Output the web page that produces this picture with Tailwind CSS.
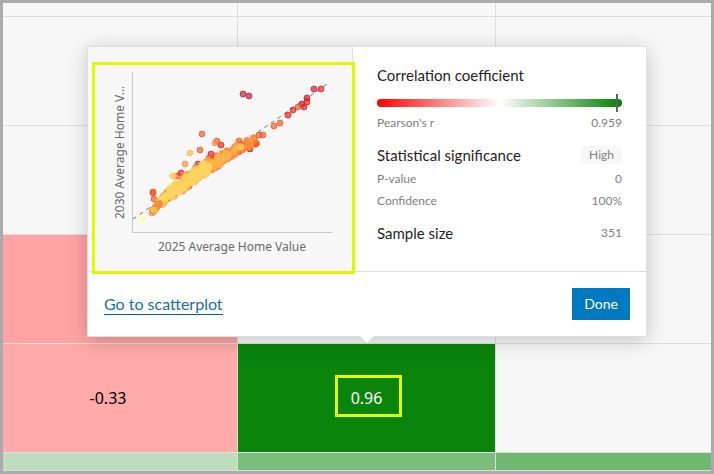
<!DOCTYPE html>
<html lang="en">

<head>
  <title>Correlation matrix</title>
  <meta charset="UTF-8">
  <meta name="viewport" content="width=device-width, initial-scale=1">
  <script src="https://cdn.jsdelivr.net/npm/@tailwindcss/browser@4"></script>
</head>

<body class="bg-[#f7f7f7] font-['Lato',sans-serif]">
  <main class="relative min-h-screen overflow-hidden border-3 border-[#ababab]">

    <!-- Matrix -->
    <table class="w-full table-fixed border-separate border-spacing-0 text-center font-['Noto_Sans',sans-serif] text-base text-black [&_td]:border-b [&_td]:border-[#dedede] [&_td]:p-0 [&_td:not(:last-child)]:border-r">
      <colgroup>
        <col class="w-[235px]">
        <col class="w-[258px]">
        <col>
      </colgroup>
      <tbody>
        <tr class="h-[14px]"><td></td><td></td><td></td></tr>
        <tr class="h-[109px]"><td></td><td></td><td></td></tr>
        <tr class="h-[109px]"><td></td><td></td><td></td></tr>
        <tr class="h-[109px]"><td class="bg-[#ffa4a4]"></td><td></td><td></td></tr>
        <tr class="h-[109px]">
          <td class="bg-[#ffaaaa]"><span class="pr-6">-0.33</span></td>
          <td class="bg-[#0b840b] text-white">
            <span class="relative">0.96
              <span class="absolute -top-3 -right-5 -bottom-2 -left-4 border-3 border-[#e5f900]"></span>
            </span>
          </td>
          <td></td>
        </tr>
        <tr class="h-[18px]">
          <td class="bg-[#bdddbd]"></td>
          <td class="bg-[#7bbd7b]"></td>
          <td class="bg-[#70b870]"></td>
        </tr>
      </tbody>
    </table>

    <!-- Popover -->
    <section class="absolute top-[43px] left-[84px] w-[560px] border border-[#dfdfdf] bg-white shadow-[0_4px_20px_rgba(0,0,0,0.2)]">
      <div class="flex border-b border-[#dfdfdf]">
        <div class="relative w-[265px] border-r border-[#dfdfdf] bg-[#f7f7f7] font-['Noto_Sans',sans-serif]">
          <div class="flex pt-[25px] pl-5">
            <div class="flex h-[160px] w-6 rotate-180 items-center justify-center text-xs leading-6 whitespace-nowrap text-[#6a6a6a] [writing-mode:vertical-rl]">2030 Average Home V...</div>
            <svg id="plot" class="h-[161px] w-[201px] overflow-visible" viewBox="0 0 201 161" role="img" aria-label="Scatterplot">
              <path d="M0.5 0V160.5H200" fill="none" stroke="#c8c8c8" />
              <path d="M1 147L198 10" fill="none" stroke="#707070" stroke-dasharray="4 4" />
            </svg>
          </div>
          <div class="mt-1 pl-6 text-center text-xs leading-5 text-[#6a6a6a]">2025 Average Home Value</div>
          <div class="absolute top-[15px] -right-[3px] -bottom-[3px] left-1 border-3 border-[#e1f900]"></div>
        </div>

        <div class="flex-1 px-6 pt-[18px] pb-7 text-xs leading-5 text-[#808080]">
          <h2 class="text-[15px] leading-5 text-[#1f1f1f]">Correlation coefficient</h2>
          <div class="relative mt-3.5 h-2 rounded-full bg-linear-to-r/srgb from-[#ff0000] via-white to-[#008000]">
            <div class="absolute -inset-y-[5px] right-1 w-0.5 bg-[#606060]"></div>
          </div>
          <div class="mt-1.5 flex justify-between"><span>Pearson's r</span><span>0.959</span></div>
          <div class="mt-3 flex items-center justify-between">
            <h2 class="text-[15px] leading-5 text-[#1f1f1f]">Statistical significance</h2>
            <span class="rounded bg-[#f7f7f7] px-2 leading-[18px]">High</span>
          </div>
          <div class="mt-1 flex justify-between"><span>P-value</span><span>0</span></div>
          <div class="mt-0.5 flex justify-between"><span>Confidence</span><span>100%</span></div>
          <div class="mt-3 flex justify-between">
            <h2 class="text-[15px] leading-5 text-[#1f1f1f]">Sample size</h2>
            <span>351</span>
          </div>
        </div>
      </div>
      <div class="flex items-center justify-between p-4">
        <a href="#" class="border-b border-[#00619b] text-base leading-5 text-[#1a70a5]">Go to scatterplot</a>
        <button type="button" class="h-8 bg-[#0079c1] px-3 text-sm text-white">Done</button>
      </div>
      <svg class="absolute top-full left-1/2 h-[7px] w-[14px] -translate-x-1/2" viewBox="0 0 14 7">
        <path d="M0 0H14L7 7Z" fill="#fff" />
      </svg>
    </section>
  </main>

  <script>
    const plot = document.getElementById('plot')
    const colors = ['#c8102e', '#e31a1c', '#f4511e', '#fd8d3c', '#feb24c', '#fed45f', '#ffff99']

    // x, y, color index
    const outer = [
      [111, 22, 0], [117, 24, 0], [182, 17, 0], [189, 17, 1], [175, 26, 0], [175, 30, 1],
      [170, 32, 0], [172, 35, 1], [166, 35, 2], [161, 38, 1], [156, 43, 1], [148, 51, 2],
      [142, 54, 2], [131, 63, 2], [127, 63, 2], [118, 77, 0], [113, 74, 0], [107, 69, 2],
      [103, 75, 1], [89, 73, 1], [95, 79, 1], [85, 69, 2], [83, 71, 3], [90, 81, 4],
      [70, 62, 2], [68, 78, 2], [79, 82, 1], [77, 86, 2], [58, 81, 4], [53, 92, 3],
      [45, 104, 2], [41, 104, 4], [49, 101, 1], [66, 92, 1], [21, 121, 2], [22, 127, 2],
      [21, 120, 2], [20, 141, 3], [22, 138, 4], [11, 147, 6]
    ]

    // Midline of the dense cloud: x, y, spread
    const ridge = [
      [21, 139, 1], [28, 131, 3], [36, 123, 6], [47, 115, 7], [57, 108, 7],
      [67, 101, 7], [77, 94, 6], [87, 88, 4], [97, 82, 4], [107, 76, 4], [124, 68, 4]
    ]
    let seed = 7
    const random = () => (seed = (seed * 16807) % 2147483647) / 2147483647

    const cloud = []
    for (let i = 0; i < 420; i++) {
      const t = random() * (i < 200 ? 10 : i < 300 ? 9 : 6)
      const k = Math.floor(t)
      const [x1, y1, s] = ridge[k]
      const [x2, y2] = ridge[k + 1]
      const base = i < 90 ? 2 : i < 200 ? 3 : i < 300 ? 4 : 5
      // lighter dots stay nearer the midline
      const off = (random() - 0.5) * 2 * s * (base > 3 ? 0.8 : 1)
      const x = x1 + (x2 - x1) * (t - k) + off * 0.5
      const y = y1 + (y2 - y1) * (t - k) + off * 0.8
      cloud.push([x, y, k === 0 ? 3 : base])
    }

    for (const [x, y, c] of [...outer, ...cloud, [41, 104, 5], [22, 138, 5], [109, 75, 5]]) {
      const dot = document.createElementNS('http://www.w3.org/2000/svg', 'circle')
      dot.setAttribute('cx', x)
      dot.setAttribute('cy', y)
      dot.setAttribute('r', 3)
      dot.setAttribute('fill', colors[c])
      dot.setAttribute('fill-opacity', 0.65)
      dot.setAttribute('stroke', colors[c])
      dot.setAttribute('stroke-opacity', 0.7)
      plot.appendChild(dot)
    }
  </script>
</body>

</html>
